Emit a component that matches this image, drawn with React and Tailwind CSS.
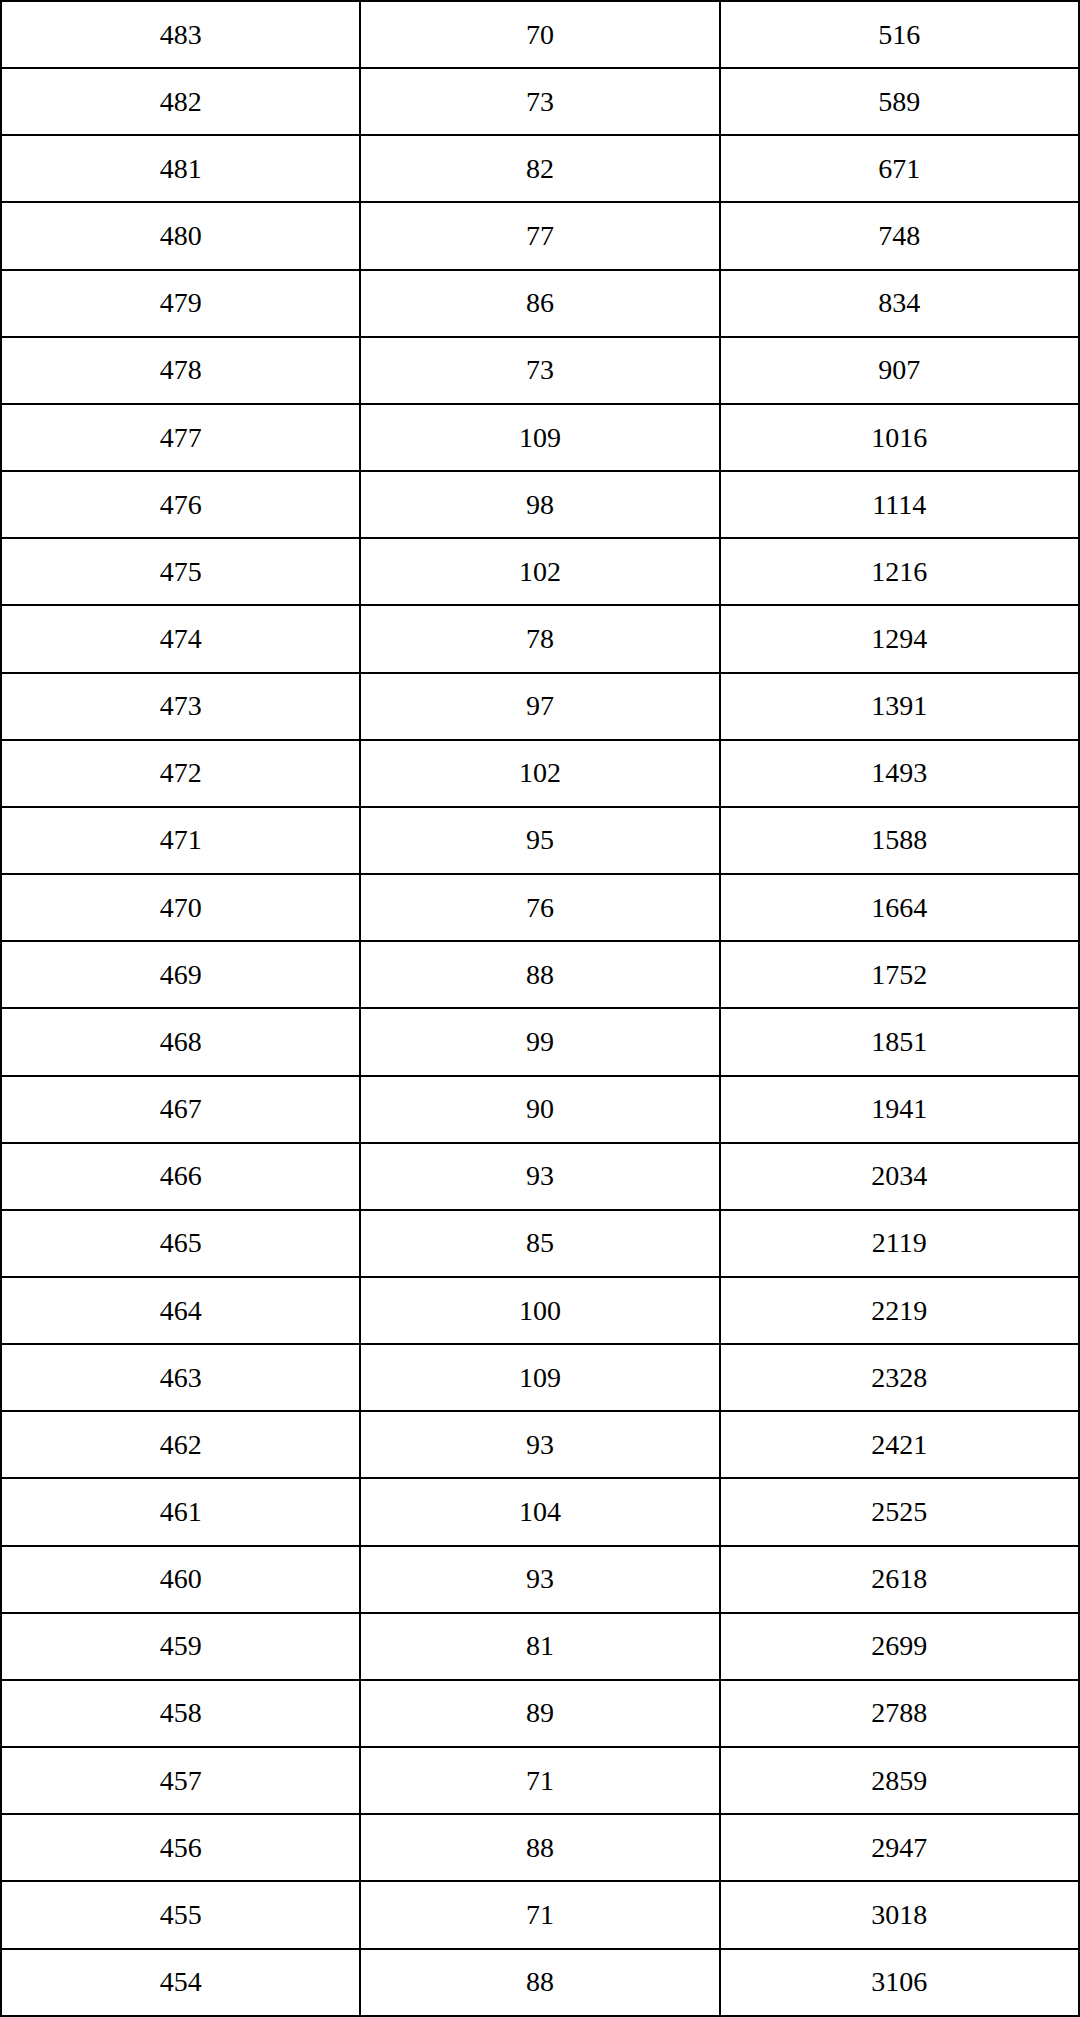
const rows = [
  [483, 70, 516],
  [482, 73, 589],
  [481, 82, 671],
  [480, 77, 748],
  [479, 86, 834],
  [478, 73, 907],
  [477, 109, 1016],
  [476, 98, 1114],
  [475, 102, 1216],
  [474, 78, 1294],
  [473, 97, 1391],
  [472, 102, 1493],
  [471, 95, 1588],
  [470, 76, 1664],
  [469, 88, 1752],
  [468, 99, 1851],
  [467, 90, 1941],
  [466, 93, 2034],
  [465, 85, 2119],
  [464, 100, 2219],
  [463, 109, 2328],
  [462, 93, 2421],
  [461, 104, 2525],
  [460, 93, 2618],
  [459, 81, 2699],
  [458, 89, 2788],
  [457, 71, 2859],
  [456, 88, 2947],
  [455, 71, 3018],
  [454, 88, 3106],
];

export default function App() {
  return (
    <div className="w-[1080px] h-[2017px] bg-white">
      <table
        className="w-[1080px] h-[2017px] border-collapse table-fixed text-[28px] text-black"
        style={{ fontFamily: '"Liberation Serif", "DejaVu Serif", serif' }}
      >
        <tbody>
          {rows.map((r, i) => (
            <tr key={i}>
              {r.map((v, j) => (
                <td
                  key={j}
                  className="border-2 border-black text-center align-middle p-0"
                >
                  {v}
                </td>
              ))}
            </tr>
          ))}
        </tbody>
      </table>
    </div>
  );
}
